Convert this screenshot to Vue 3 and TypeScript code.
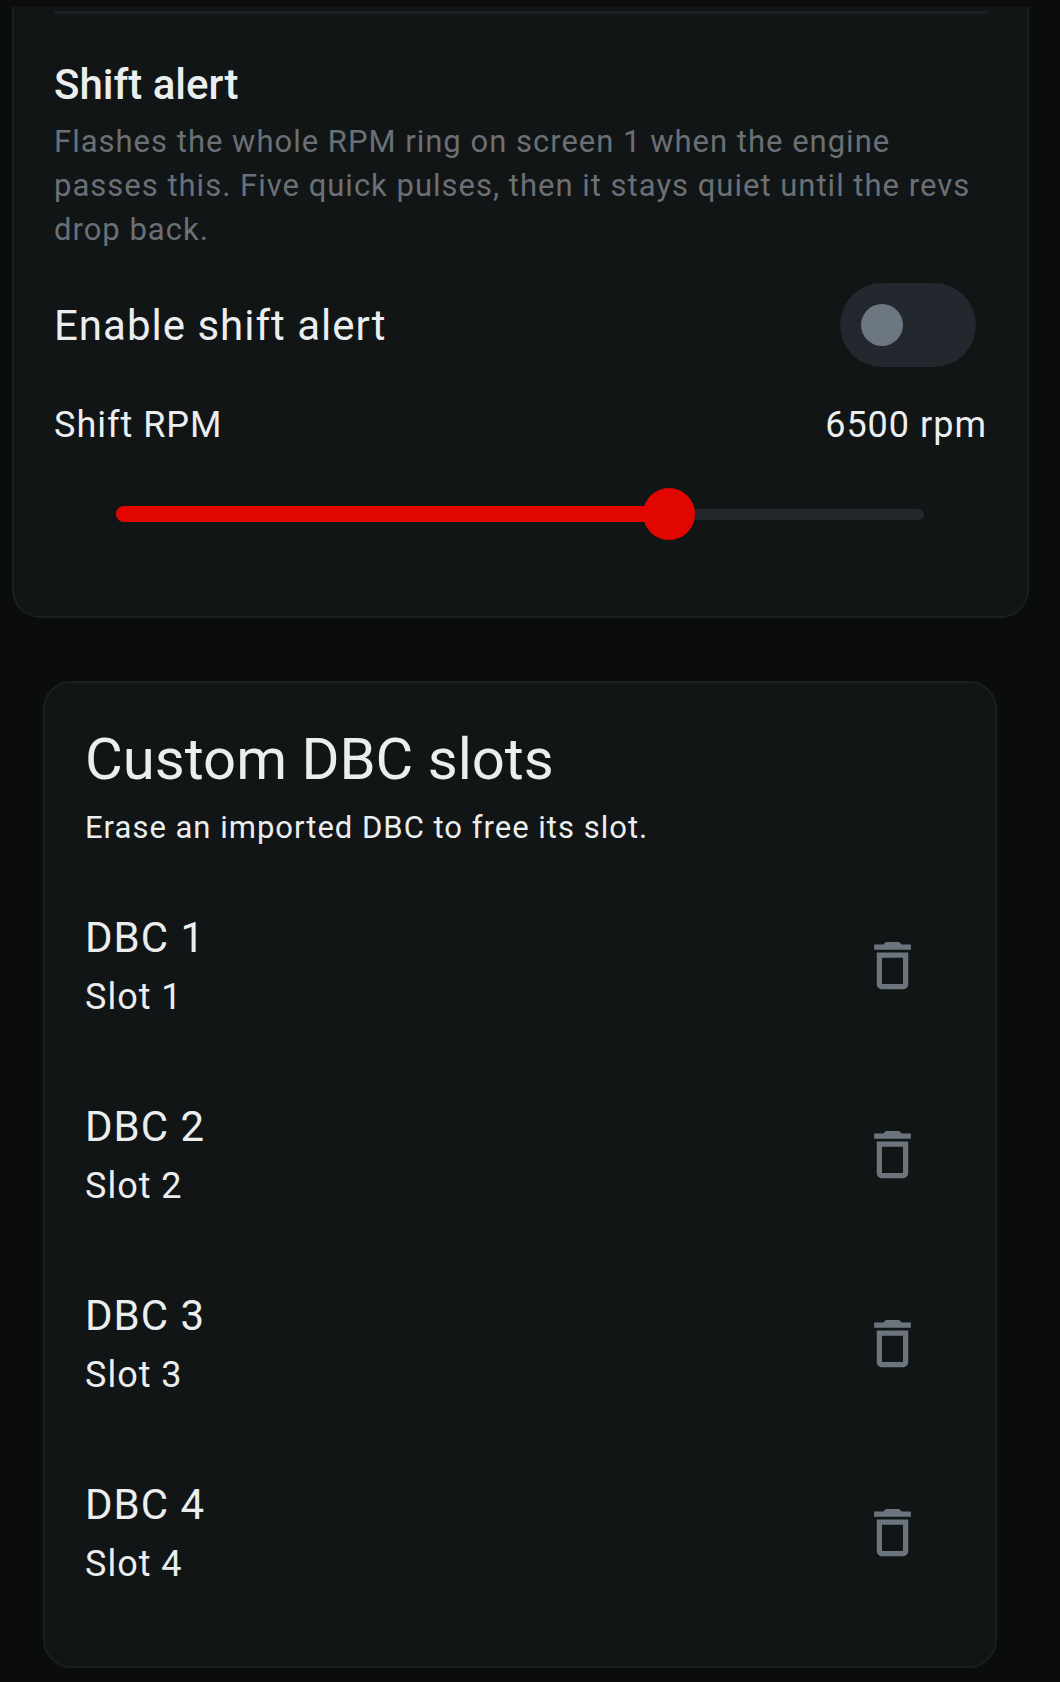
<script setup lang="ts">
import { computed, ref } from 'vue'

interface Slot {
  id: number
  name: string
}

const MIN_RPM = 1000
const MAX_RPM = 9000

const shiftAlert = ref(false)
const shiftRpm = ref(6500)
const slots = ref<Slot[]>([1, 2, 3, 4].map((id) => ({ id, name: `DBC ${id}` })))

const fillPercent = computed(() => ((shiftRpm.value - MIN_RPM) / (MAX_RPM - MIN_RPM)) * 100)

function erase(id: number) {
  slots.value = slots.value.filter((slot) => slot.id !== id)
}
</script>

<template>
  <main class="page">
    <section class="card alert-card">
      <hr class="divider" />
      <h3 class="section-title">Shift alert</h3>
      <p class="small muted">
        Flashes the whole RPM ring on screen 1 when the engine passes this. Five quick pulses, then it
        stays quiet until the revs drop back.
      </p>
      <div class="switch-row">
        <label class="body-large" for="shift-enable">Enable shift alert</label>
        <input id="shift-enable" v-model="shiftAlert" class="switch" type="checkbox" role="switch" />
      </div>
      <div class="value-row body-medium">
        <label for="shift-rpm">Shift RPM</label>
        <output for="shift-rpm">{{ shiftRpm }} rpm</output>
      </div>
      <div class="slider">
        <div class="rail"></div>
        <div class="fill-area">
          <div class="fill" :style="{ width: fillPercent + '%' }"></div>
        </div>
        <input id="shift-rpm" v-model.number="shiftRpm" type="range" :min="MIN_RPM" :max="MAX_RPM" step="100" />
      </div>
    </section>

    <section class="card slots-card">
      <h2 class="card-title">Custom DBC slots</h2>
      <p class="small">Erase an imported DBC to free its slot.</p>
      <ul class="slots">
        <li v-for="slot in slots" :key="slot.id" class="slot">
          <div>
            <div class="body-large">{{ slot.name }}</div>
            <div class="slot-label body-medium">Slot {{ slot.id }}</div>
          </div>
          <button class="icon-button" type="button" :aria-label="`Erase ${slot.name}`" @click="erase(slot.id)">
            <svg viewBox="0 0 24 24" aria-hidden="true">
              <path
                fill="currentColor"
                d="M16 9v10H8V9h8m-1.5-6h-5l-1 1H5v2h14V4h-3.5l-1-1zM18 7H6v12c0 1.1.9 2 2 2h8c1.1 0 2-.9 2-2V7z"
              />
            </svg>
          </button>
        </li>
      </ul>
    </section>
  </main>
</template>

<style>
body {
  margin: 0;
  background: #0a0c0e;
}
</style>

<style scoped>
.page {
  box-sizing: border-box;
  min-height: 100vh;
  display: flex;
  flex-direction: column;
  gap: 63px;
  padding: 7px 31px 13px 12px;
  background: #0a0c0e;
  color: #ebeeef;
  font-family: Roboto, "Liberation Sans", sans-serif;
}

.card {
  border: 2px solid #1a1f20;
  border-radius: 28px;
  background: #111516;
}

.alert-card {
  border-top: 0;
  border-radius: 0 0 28px 28px;
  padding: 4px 40px 76px;
}

.slots-card {
  margin: 0 32px 0 31px;
  padding: 41px 40px 39px;
}

.divider {
  height: 3px;
  margin: 0 0 39px;
  border: 0;
  background: #192021;
}

h2,
h3,
p,
ul {
  margin: 0;
}

.section-title {
  font-size: 42px;
  font-weight: 500;
  line-height: 63px;
}

.card-title {
  font-size: 58px;
  font-weight: 400;
  line-height: 70px;
}

.card-title + .small {
  margin-top: 12px;
}

.small {
  font-size: 31px;
  line-height: 44px;
  letter-spacing: 1px;
}

.section-title + .small {
  margin-top: 4px;
}

.muted {
  color: #6a7075;
}

.body-large {
  font-size: 42px;
  line-height: 63px;
  letter-spacing: 1px;
}

.body-medium {
  font-size: 36px;
  line-height: 53px;
  letter-spacing: 1px;
}

.switch-row {
  display: flex;
  align-items: center;
  justify-content: space-between;
  margin-top: 31px;
  padding-right: 11px;
}

.switch {
  appearance: none;
  box-sizing: border-box;
  flex: none;
  display: flex;
  align-items: center;
  width: 136px;
  height: 84px;
  margin: 0;
  padding: 0 21px;
  border-radius: 42px;
  background: #23282e;
}

.switch::before {
  content: "";
  width: 42px;
  height: 42px;
  border-radius: 50%;
  background: #6c7782;
}

.switch:checked {
  justify-content: flex-end;
  background: #e10600;
}

.switch:checked::before {
  background: #ebeeef;
}

.value-row {
  display: flex;
  justify-content: space-between;
  margin-top: 32px;
}

.slider {
  display: grid;
  align-items: center;
  margin-top: 36px;
  padding: 0 43px 0 42px;
}

.slider > * {
  grid-area: 1 / 1;
}

.rail {
  height: 11px;
  margin: 0 20px;
  border-radius: 6px;
  background: #22272b;
}

.fill-area {
  margin: 0 26px 0 20px;
}

.fill {
  height: 16px;
  border-radius: 8px;
  background: #e10600;
}

.slider input {
  appearance: none;
  width: 100%;
  height: 52px;
  margin: 0;
  background: transparent;
}

.slider input::-webkit-slider-thumb {
  appearance: none;
  width: 52px;
  height: 52px;
  border-radius: 50%;
  background: #e10600;
}

.slots {
  margin-top: 21px;
  padding: 0;
  list-style: none;
}

.slot {
  display: flex;
  align-items: center;
  justify-content: space-between;
  height: 189px;
}

.slot-label {
  line-height: 57px;
}

.icon-button {
  display: grid;
  place-items: center;
  width: 126px;
  height: 126px;
  padding: 0;
  border: 0;
  border-radius: 50%;
  background: transparent;
  color: #6c757d;
}

.icon-button svg {
  width: 63px;
  height: 63px;
}
</style>
